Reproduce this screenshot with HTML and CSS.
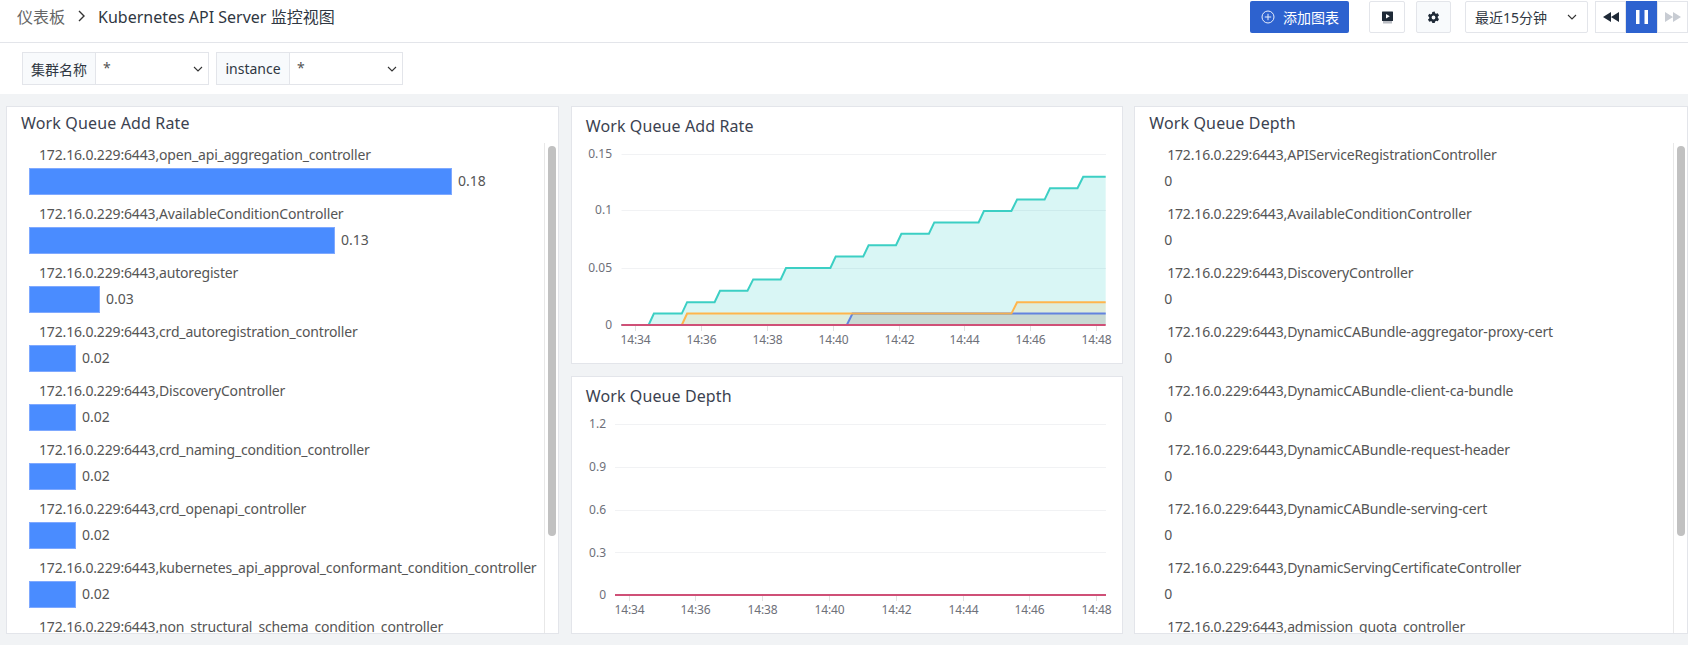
FILE: index.html
```html
<!DOCTYPE html>
<html lang="en">

<head>
    <meta charset="UTF-8">
    <title>Kubernetes API Server 监控视图</title>
    <link rel="stylesheet" href="styles.css">
</head>

<body>

    <header class="top-bar">
        <div class="breadcrumb">
            <span class="crumb-root">仪表板</span>
            <svg class="crumb-sep" width="7" height="12" viewBox="0 0 7 12"><path d="M1 1l5 5-5 5" fill="none" stroke="#333" stroke-width="1.4"/></svg>
            <span class="crumb-current">Kubernetes API Server 监控视图</span>
        </div>
        <div class="toolbar">
            <button class="btn-add">
                <svg width="14" height="14" viewBox="0 0 14 14"><circle cx="7" cy="7" r="6" fill="none" stroke="#e8eefb" stroke-width="1"/><path d="M7 3.800v6.400M3.800 7h6.400" stroke="#e8eefb" stroke-width="1"/></svg>
                添加图表
            </button>
            <button class="btn-icon btn-play">
                <svg width="13" height="13" viewBox="0 0 13 13"><rect x="1" y="0.500" width="11" height="9.500" rx="0.500" fill="#1f2a37"/><path d="M5 3v4.500L8.800 5.200z" fill="#fff"/><rect x="2" y="10" width="9" height="2.500" fill="#b9bcc2"/></svg>
            </button>
            <button class="btn-icon btn-gear">
                <svg width="13" height="13" viewBox="0 0 24 24"><path fill="#1f2a37" fill-rule="evenodd" d="M14.300 1l.5 3a8.500 8.500 0 0 1 2.200 1.300l2.900-1 2.300 4-2.300 2a8.500 8.500 0 0 1 0 2.600l2.300 2-2.300 4-2.900-1a8.500 8.500 0 0 1-2.200 1.300l-.5 3H9.700l-.5-3A8.500 8.500 0 0 1 7 18.900l-2.900 1-2.300-4 2.300-2a8.500 8.500 0 0 1 0-2.600l-2.300-2 2.300-4 2.900 1a8.500 8.500 0 0 1 2.200-1.300l.5-3zM12 8.500a3.500 3.500 0 1 0 0 7 3.500 3.500 0 0 0 0-7z"/></svg>
            </button>
            <div class="time-select">
                <span>最近15分钟</span>
                <svg width="10" height="6" viewBox="0 0 10 6"><path d="M1 1l4 4 4-4" fill="none" stroke="#333" stroke-width="1.1"/></svg>
            </div>
            <div class="player">
                <button class="player-btn">
                    <svg width="16" height="10" viewBox="0 0 16 10"><path d="M8 0v10L0 5zM16 0v10L8 5z" fill="#1f2a37"/></svg>
                </button>
                <button class="player-btn player-active">
                    <svg width="12" height="14" viewBox="0 0 12 14"><path d="M0 0h3.500v14H0zM8.500 0H12v14H8.500z" fill="#fff"/></svg>
                </button>
                <button class="player-btn">
                    <svg width="16" height="10" viewBox="0 0 16 10"><path d="M0 0v10l8-5zM8 0v10l8-5z" fill="#c8ccd3"/></svg>
                </button>
            </div>
        </div>
    </header>

    <div class="filter-bar">
        <div class="filter-group">
            <span class="filter-label">集群名称</span>
            <div class="filter-value">
                <span class="filter-star">*</span>
                <svg width="10" height="6" viewBox="0 0 10 6"><path d="M1 1l4 4 4-4" fill="none" stroke="#333" stroke-width="1.1"/></svg>
            </div>
        </div>
        <div class="filter-group">
            <span class="filter-label">instance</span>
            <div class="filter-value">
                <span class="filter-star">*</span>
                <svg width="10" height="6" viewBox="0 0 10 6"><path d="M1 1l4 4 4-4" fill="none" stroke="#333" stroke-width="1.1"/></svg>
            </div>
        </div>
    </div>

    <main class="dashboard">
        <section class="panel">
            <h3 class="list-title">Work Queue Add Rate</h3>
            <div class="list-body">
                <div class="bar-list">
                    <div class="bar-item"><div class="bar-name">172.16.0.229:6443,open_api_aggregation_controller</div><div class="bar-row"><div class="bar" style="width: 423px"></div><span class="bar-value">0.18</span></div></div>
                    <div class="bar-item"><div class="bar-name">172.16.0.229:6443,AvailableConditionController</div><div class="bar-row"><div class="bar" style="width: 306px"></div><span class="bar-value">0.13</span></div></div>
                    <div class="bar-item"><div class="bar-name">172.16.0.229:6443,autoregister</div><div class="bar-row"><div class="bar" style="width: 71px"></div><span class="bar-value">0.03</span></div></div>
                    <div class="bar-item"><div class="bar-name">172.16.0.229:6443,crd_autoregistration_controller</div><div class="bar-row"><div class="bar" style="width: 47px"></div><span class="bar-value">0.02</span></div></div>
                    <div class="bar-item"><div class="bar-name">172.16.0.229:6443,DiscoveryController</div><div class="bar-row"><div class="bar" style="width: 47px"></div><span class="bar-value">0.02</span></div></div>
                    <div class="bar-item"><div class="bar-name">172.16.0.229:6443,crd_naming_condition_controller</div><div class="bar-row"><div class="bar" style="width: 47px"></div><span class="bar-value">0.02</span></div></div>
                    <div class="bar-item"><div class="bar-name">172.16.0.229:6443,crd_openapi_controller</div><div class="bar-row"><div class="bar" style="width: 47px"></div><span class="bar-value">0.02</span></div></div>
                    <div class="bar-item"><div class="bar-name">172.16.0.229:6443,kubernetes_api_approval_conformant_condition_controller</div><div class="bar-row"><div class="bar" style="width: 47px"></div><span class="bar-value">0.02</span></div></div>
                    <div class="bar-item"><div class="bar-name">172.16.0.229:6443,non_structural_schema_condition_controller</div></div>
                </div>
                <div class="scroll-track"><div class="scroll-thumb"></div></div>
            </div>
        </section>

        <div class="chart-column">
            <section class="panel chart-panel">
                <h3 class="chart-title">Work Queue Add Rate</h3>
                <svg class="chart" width="550" height="220" viewBox="0 0 550 220">
                    <g class="grid">
                        <path d="M49.500 14.500H534M49.500 70.500H534M49.500 128.500H534"/>
                    </g>
                    <g class="axis-ticks">
                        <path d="M63.500 186v5M129.500 186v5M195.500 186v5M261.500 186v5M327.500 186v5M392.500 186v5M458.500 186v5M524.500 186v5"/>
                    </g>
                    <g class="y-labels">
                        <text x="40" y="13">0.15</text>
                        <text x="40" y="69">0.1</text>
                        <text x="40" y="127">0.05</text>
                        <text x="40" y="184">0</text>
                    </g>
                    <g class="x-labels">
                        <text x="63.500" y="199">14:34</text>
                        <text x="129.500" y="199">14:36</text>
                        <text x="195.500" y="199">14:38</text>
                        <text x="261.500" y="199">14:40</text>
                        <text x="327.500" y="199">14:42</text>
                        <text x="392.500" y="199">14:44</text>
                        <text x="458.500" y="199">14:46</text>
                        <text x="524.500" y="199">14:48</text>
                    </g>
                    <!-- teal series -->
                    <path class="area-teal" d="M49.400 185H76.600L81.900 173.600H109.800L115.100 162.200H142.600L148 150.800H175.500L181.200 139.400H208.700L214 128H258.400L263.700 116.600H291.200L296.600 105.200H324L329.400 93.800H356.900L362.300 82.400H406.600L411.900 71H439.400L445.100 59.600H472.600L478 48.200H505.500L511.200 36.800H533.700V185z"/>
                    <path class="line-teal" d="M49.400 185H76.600L81.900 173.600H109.800L115.100 162.200H142.600L148 150.800H175.500L181.200 139.400H208.700L214 128H258.400L263.700 116.600H291.200L296.600 105.200H324L329.400 93.800H356.900L362.300 82.400H406.600L411.900 71H439.400L445.100 59.600H472.600L478 48.200H505.500L511.200 36.800H533.700"/>
                    <!-- blue line sits under the orange one, its area tints both -->
                    <path class="line-blue" d="M274.800 185L280.500 173.600H533.700"/>
                    <path class="area-orange" d="M109.800 185L115.100 173.600H439.400L445.100 162.200H533.700V185z"/>
                    <path class="line-orange" d="M109.800 185L115.100 173.600H439.400L445.100 162.200H533.700"/>
                    <path class="area-blue" d="M274.800 185L280.500 173.600H533.700V185z"/>
                    <path class="line-zero" d="M49.400 185H533.700"/>
                </svg>
            </section>

            <section class="panel chart-panel">
                <h3 class="chart-title">Work Queue Depth</h3>
                <svg class="chart" width="550" height="220" viewBox="0 0 550 220">
                    <g class="grid">
                        <path d="M43 14.500H534M43 57.500H534M43 100.500H534M43 142.500H534"/>
                    </g>
                    <g class="axis-ticks">
                        <path d="M57.500 186v5M123.500 186v5M190.500 186v5M257.500 186v5M324.500 186v5M391.500 186v5M457.500 186v5M524.500 186v5"/>
                    </g>
                    <g class="y-labels">
                        <text x="34" y="13">1.2</text>
                        <text x="34" y="56">0.9</text>
                        <text x="34" y="99">0.6</text>
                        <text x="34" y="142">0.3</text>
                        <text x="34" y="184">0</text>
                    </g>
                    <g class="x-labels">
                        <text x="57.500" y="199">14:34</text>
                        <text x="123.500" y="199">14:36</text>
                        <text x="190.500" y="199">14:38</text>
                        <text x="257.500" y="199">14:40</text>
                        <text x="324.500" y="199">14:42</text>
                        <text x="391.500" y="199">14:44</text>
                        <text x="457.500" y="199">14:46</text>
                        <text x="524.500" y="199">14:48</text>
                    </g>
                    <path class="line-zero" d="M43 185H534"/>
                </svg>
            </section>
        </div>

        <section class="panel">
            <h3 class="list-title">Work Queue Depth</h3>
            <div class="list-body">
                <div class="bar-list">
                    <div class="bar-item"><div class="bar-name">172.16.0.229:6443,APIServiceRegistrationController</div><div class="bar-row"><span class="bar-value">0</span></div></div>
                    <div class="bar-item"><div class="bar-name">172.16.0.229:6443,AvailableConditionController</div><div class="bar-row"><span class="bar-value">0</span></div></div>
                    <div class="bar-item"><div class="bar-name">172.16.0.229:6443,DiscoveryController</div><div class="bar-row"><span class="bar-value">0</span></div></div>
                    <div class="bar-item"><div class="bar-name">172.16.0.229:6443,DynamicCABundle-aggregator-proxy-cert</div><div class="bar-row"><span class="bar-value">0</span></div></div>
                    <div class="bar-item"><div class="bar-name">172.16.0.229:6443,DynamicCABundle-client-ca-bundle</div><div class="bar-row"><span class="bar-value">0</span></div></div>
                    <div class="bar-item"><div class="bar-name">172.16.0.229:6443,DynamicCABundle-request-header</div><div class="bar-row"><span class="bar-value">0</span></div></div>
                    <div class="bar-item"><div class="bar-name">172.16.0.229:6443,DynamicCABundle-serving-cert</div><div class="bar-row"><span class="bar-value">0</span></div></div>
                    <div class="bar-item"><div class="bar-name">172.16.0.229:6443,DynamicServingCertificateController</div><div class="bar-row"><span class="bar-value">0</span></div></div>
                    <div class="bar-item"><div class="bar-name">172.16.0.229:6443,admission_quota_controller</div></div>
                </div>
                <div class="scroll-track"><div class="scroll-thumb"></div></div>
            </div>
        </section>
    </main>

</body>

</html>
```

FILE: styles.css
```css
* {
    box-sizing: border-box;
}

html,
body {
    margin: 0;
    height: 100%;
}

body {
    display: flex;
    flex-direction: column;
    height: 100vh;
    overflow: hidden;
    background-color: #fff;
    color: #3b4250;
    font-family: "Noto Sans", "Noto Sans CJK SC", sans-serif;
    font-size: 14px;
}

button {
    font-family: inherit;
    cursor: pointer;
}

.top-bar {
    display: flex;
    flex: none;
    justify-content: space-between;
    height: 43px;
    padding: 1px 0 0 17px;
    border-bottom: 1px solid #e3e5ea;
}

.breadcrumb {
    display: flex;
    align-items: center;
    height: 30px;
    font-size: 16px;
}

.crumb-root {
    color: #666;
}

.crumb-sep {
    margin: 0 13px 0 13px;
}

.crumb-current {
    color: #2f3742;
}

.toolbar {
    display: flex;
    align-items: flex-start;
}

.btn-add {
    display: flex;
    align-items: center;
    gap: 8px;
    width: 99px;
    height: 32px;
    margin-right: 20px;
    padding: 0 0 0 11px;
    background-color: #2d62cf;
    border: none;
    border-radius: 2px;
    color: #fff;
    font-size: 14px;
}

.btn-icon {
    display: flex;
    align-items: center;
    justify-content: center;
    height: 32px;
    padding: 0;
    background-color: #fff;
    border: 1px solid #e3e5ea;
    border-radius: 2px;
}

.btn-play {
    width: 36px;
    margin-right: 11px;
}

.btn-gear {
    width: 35px;
    margin-right: 14px;
    background-color: #f8fafc;
}

.time-select {
    display: flex;
    align-items: center;
    justify-content: space-between;
    width: 123px;
    height: 32px;
    margin-right: 7px;
    padding: 0 10px 0 9px;
    border: 1px solid #e3e5ea;
    border-radius: 2px;
    color: #2f3742;
}

.player {
    display: flex;
    width: 93px;
    height: 32px;
}

.player-btn {
    display: flex;
    flex: 1;
    align-items: center;
    justify-content: center;
    padding: 0;
    background-color: #fff;
    border: 1px solid #e3e5ea;
}

.player-active {
    background-color: #2d62cf;
    border-color: #2d62cf;
}

.filter-bar {
    display: flex;
    flex: none;
    gap: 7px;
    height: 51px;
    padding: 9px 0 0 22px;
}

.filter-group {
    display: flex;
    width: 187px;
    height: 33px;
    border: 1px solid #e3e5ea;
}

.filter-label {
    display: flex;
    align-items: center;
    justify-content: center;
    width: 73px;
    background-color: #f8fafc;
    border-right: 1px solid #e3e5ea;
    color: #2f3742;
    font-size: 14px;
}

.filter-value {
    display: flex;
    flex: 1;
    align-items: center;
    justify-content: space-between;
    padding: 0 5px 0 7px;
    color: #555;
}

.filter-star {
    margin-top: -3px;
}

.dashboard {
    display: grid;
    flex: 1;
    grid-template-columns: 553.4px 552px 1fr;
    column-gap: 11.4px;
    min-height: 0;
    padding: 12px 0 11px 6px;
    background-color: #f1f3f5;
}

.panel {
    display: flex;
    flex-direction: column;
    min-height: 0;
    background-color: #fff;
    border: 1px solid #e3e5ea;
}

.list-title {
    flex: none;
    height: 36px;
    margin: 0;
    padding: 5px 0 0 14px;
    color: #3b4250;
    font-size: 16px;
    font-weight: 400;
    letter-spacing: 0.15px;
    line-height: 22px;
}

.list-body {
    display: flex;
    flex: 1;
    min-height: 0;
}

.bar-list {
    flex: 1;
    min-width: 0;
    padding-top: 2px;
    overflow: hidden;
}

.scroll-track {
    flex: none;
    width: 14px;
    padding: 3px 0 0 3px;
    border-left: 1px solid #e8e8e8;
}

.scroll-thumb {
    width: 8px;
    height: 390px;
    background-color: #c1c1c1;
    border-radius: 4px;
}

.bar-item {
    height: 59px;
    padding-left: 22px;
}

.bar-name {
    height: 20px;
    padding-left: 10px;
    color: #555;
    letter-spacing: -0.16px;
    line-height: 20px;
    white-space: nowrap;
}

.bar-row {
    display: flex;
    align-items: center;
    gap: 6px;
    height: 27px;
    margin-top: 3px;
}

.bar {
    height: 27px;
    background-color: #4a8cff;
    border: 1px solid #7fa9ff;
}

.bar-value {
    margin-bottom: 3px;
    color: #555;
}

.bar-row .bar-value:first-child {
    margin-left: 7px;
}

.chart-column {
    display: flex;
    flex-direction: column;
    gap: 12px;
    min-height: 0;
}

.chart-panel {
    flex: 1;
}

.chart-title {
    flex: none;
    height: 33px;
    margin: 0;
    padding: 8px 0 0 14px;
    color: #3b4250;
    font-size: 16px;
    font-weight: 400;
    letter-spacing: 0.1px;
    line-height: 22px;
}

.chart {
    display: block;
}

.grid path {
    fill: none;
    stroke: #f1f2f4;
}

.axis-ticks path {
    fill: none;
    stroke: #e0e0e0;
}

.y-labels text {
    fill: #6e7079;
    font-size: 12px;
    text-anchor: end;
    dominant-baseline: central;
}

.x-labels text {
    fill: #6e7079;
    font-size: 12px;
    letter-spacing: -0.1px;
    text-anchor: middle;
    dominant-baseline: central;
}

.area-teal {
    fill: #36cfc9;
    fill-opacity: 0.19;
}

.area-orange {
    fill: #ffb54c;
    fill-opacity: 0.15;
}

.area-blue {
    fill: #4a6fa5;
    fill-opacity: 0.15;
}

.line-teal,
.line-orange,
.line-blue,
.line-zero {
    fill: none;
    stroke-width: 2;
}

.line-teal {
    stroke: #3ccfc4;
}

.line-orange {
    stroke: #ffb54c;
}

.line-blue {
    stroke: #4a7dff;
}

.line-zero {
    stroke: #cf5077;
}
```
